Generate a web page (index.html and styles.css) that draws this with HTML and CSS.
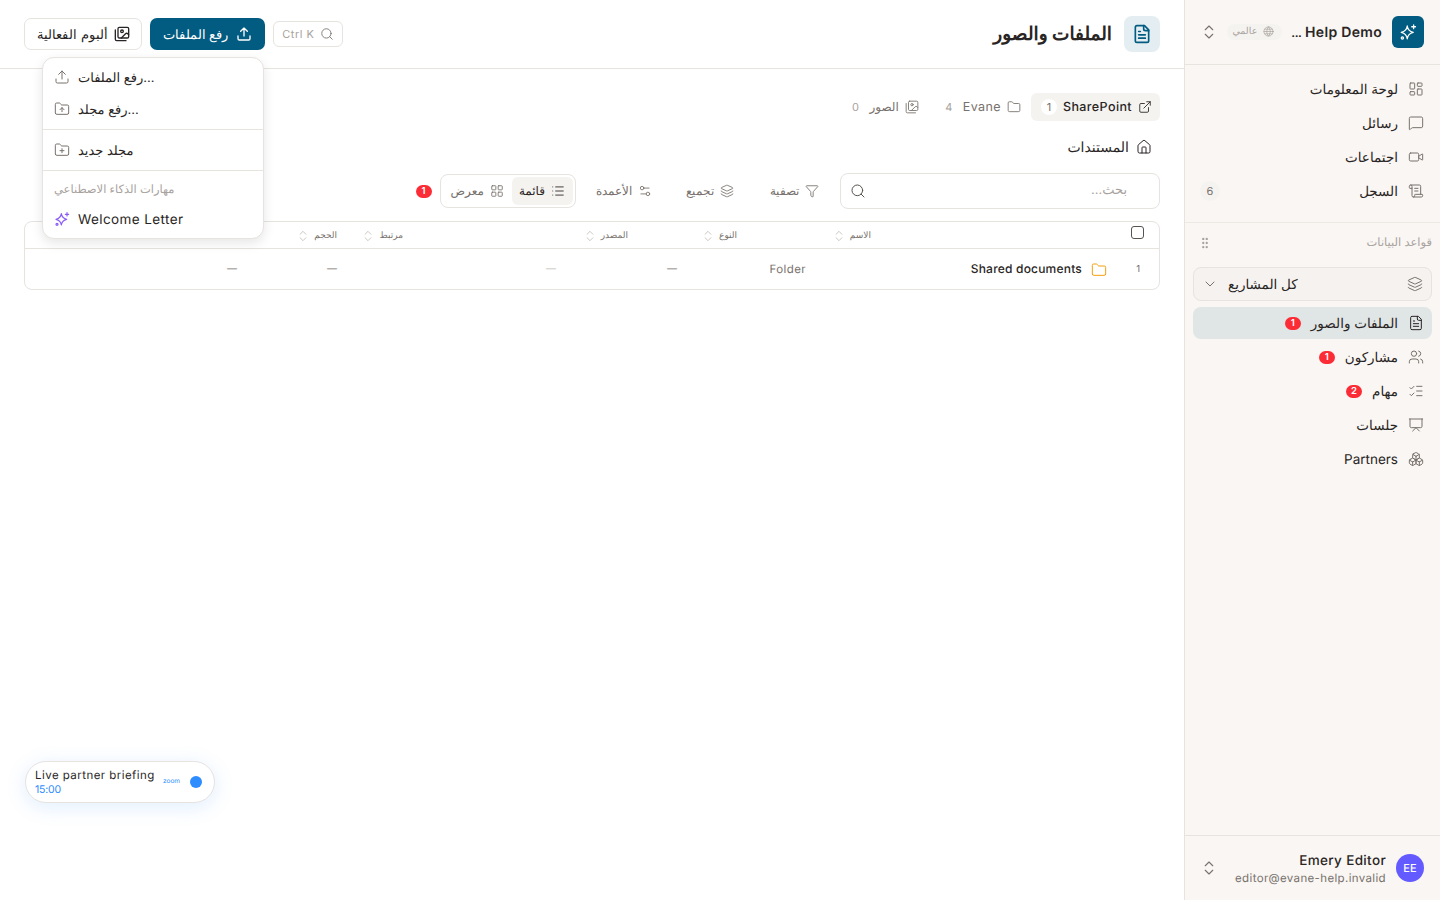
FILE: index.html
```html
<!DOCTYPE html>
<html lang="ar" dir="rtl">
<head>
  <meta charset="UTF-8">
  <meta name="viewport" content="width=device-width, initial-scale=1.0">
  <title>الملفات والصور</title>
  <link rel="stylesheet" href="styles.css">
</head>
<body>
  <!-- Icons -->
  <svg class="icon-defs" aria-hidden="true">
    <symbol id="i-sparkles" viewBox="0 0 24 24"><path d="M11 4c.6 4.600 3.400 7.400 8 8.500-4.600 1.100-7.400 3.900-8 8.500-.6-4.600-3.400-7.400-8-8.500 4.600-1.100 7.400-3.900 8-8.500z"/><path d="M19.500 2.500v5M17 5h5"/><circle cx="4.500" cy="20" r="1.500"/></symbol>
    <symbol id="i-updown" viewBox="0 0 24 24"><path d="m7 15 5 5 5-5M7 9l5-5 5 5"/></symbol>
    <symbol id="i-globe" viewBox="0 0 24 24"><circle cx="12" cy="12" r="10"/><path d="M12 2a14.500 14.500 0 0 0 0 20 14.500 14.500 0 0 0 0-20M2 12h20M4 7h16M4 17h16"/></symbol>
    <symbol id="i-dash" viewBox="0 0 24 24"><rect x="3" y="3" width="7" height="9" rx="1"/><rect x="14" y="3" width="7" height="5" rx="1"/><rect x="14" y="12" width="7" height="9" rx="1"/><rect x="3" y="16" width="7" height="5" rx="1"/></symbol>
    <symbol id="i-message" viewBox="0 0 24 24"><path d="M22 17a2 2 0 0 1-2 2H6.800a2 2 0 0 0-1.400.6l-2.200 2.200A.7.700 0 0 1 2 21.300V5a2 2 0 0 1 2-2h16a2 2 0 0 1 2 2z"/></symbol>
    <symbol id="i-video" viewBox="0 0 24 24"><path d="m16 13 5.200 3.500a.5.500 0 0 0 .8-.4V7.900a.5.500 0 0 0-.8-.4L16 11"/><rect x="2" y="6" width="14" height="12" rx="2"/></symbol>
    <symbol id="i-scroll" viewBox="0 0 24 24"><path d="M15 12h-5M15 8h-5M19 17V5a2 2 0 0 0-2-2H4"/><path d="M8 21h12a2 2 0 0 0 2-2v-1a1 1 0 0 0-1-1H11a1 1 0 0 0-1 1v1a2 2 0 1 1-4 0V5a2 2 0 1 0-4 0v2a1 1 0 0 0 1 1h3"/></symbol>
    <symbol id="i-grip" viewBox="0 0 24 24"><circle cx="9" cy="5" r="1"/><circle cx="15" cy="5" r="1"/><circle cx="9" cy="12" r="1"/><circle cx="15" cy="12" r="1"/><circle cx="9" cy="19" r="1"/><circle cx="15" cy="19" r="1"/></symbol>
    <symbol id="i-layers" viewBox="0 0 24 24"><path d="M12.800 2.200a2 2 0 0 0-1.600 0L2.600 6.100a1 1 0 0 0 0 1.800l8.600 3.900a2 2 0 0 0 1.600 0l8.600-3.900a1 1 0 0 0 0-1.800z"/><path d="M2 12a1 1 0 0 0 .6.900l8.600 3.900a2 2 0 0 0 1.600 0l8.600-3.900A1 1 0 0 0 22 12"/><path d="M2 17a1 1 0 0 0 .6.900l8.600 3.900a2 2 0 0 0 1.600 0l8.600-3.900A1 1 0 0 0 22 17"/></symbol>
    <symbol id="i-chevron" viewBox="0 0 24 24"><path d="m6 9 6 6 6-6"/></symbol>
    <symbol id="i-file" viewBox="0 0 24 24"><path d="M15 2H6a2 2 0 0 0-2 2v16a2 2 0 0 0 2 2h12a2 2 0 0 0 2-2V7z"/><path d="M14 2v4a2 2 0 0 0 2 2h4M10 9H8M16 13H8M16 17H8"/></symbol>
    <symbol id="i-users" viewBox="0 0 24 24"><path d="M16 21v-2a4 4 0 0 0-4-4H6a4 4 0 0 0-4 4v2"/><circle cx="9" cy="7" r="4"/><path d="M22 21v-2a4 4 0 0 0-3-3.900M16 3.100a4 4 0 0 1 0 7.800"/></symbol>
    <symbol id="i-tasks" viewBox="0 0 24 24"><path d="M13 5h8M13 12h8M13 19h8M3 17l2 2 4-4M3 7l2 2 4-4"/></symbol>
    <symbol id="i-present" viewBox="0 0 24 24"><path d="M2 3h20M21 3v11a2 2 0 0 1-2 2H5a2 2 0 0 1-2-2V3M7 21l5-5 5 5"/></symbol>
    <symbol id="i-boxes" viewBox="0 0 24 24"><path d="M2.970 12.920A2 2 0 0 0 2 14.630v3.240a2 2 0 0 0 .97 1.710l3 1.800a2 2 0 0 0 2.060 0L12 19v-5.500l-5-3-4.030 2.420Z"/><path d="m7 16.500-4.740-2.850M7 16.500l5-3M7 16.500v5.170"/><path d="M12 13.500V19l3.970 2.380a2 2 0 0 0 2.060 0l3-1.800a2 2 0 0 0 .97-1.710v-3.240a2 2 0 0 0-.97-1.710L17 10.500l-5 3Z"/><path d="m17 16.500-5-3M17 16.500l4.740-2.850M17 16.500v5.170"/><path d="M7.970 4.420A2 2 0 0 0 7 6.130v4.370l5 3 5-3V6.130a2 2 0 0 0-.97-1.710l-3-1.800a2 2 0 0 0-2.060 0l-3 1.800Z"/><path d="M12 8 7.260 5.150M12 8l4.740-2.850M12 13.500V8"/></symbol>
    <symbol id="i-search" viewBox="0 0 24 24"><circle cx="11" cy="11" r="8"/><path d="m21 21-4.300-4.300"/></symbol>
    <symbol id="i-upload" viewBox="0 0 24 24"><path d="M12 3v12M17 8l-5-5-5 5M21 15v4a2 2 0 0 1-2 2H5a2 2 0 0 1-2-2v-4"/></symbol>
    <symbol id="i-images" viewBox="0 0 24 24"><path d="M18 22H4a2 2 0 0 1-2-2V6"/><path d="m22 13-1.300-1.300a2.410 2.410 0 0 0-3.400 0L11 18"/><circle cx="12" cy="8" r="2"/><rect x="6" y="2" width="16" height="16" rx="2"/></symbol>
    <symbol id="i-external" viewBox="0 0 24 24"><path d="M15 3h6v6M10 14 21 3M18 13v6a2 2 0 0 1-2 2H5a2 2 0 0 1-2-2V8a2 2 0 0 1 2-2h6"/></symbol>
    <symbol id="i-folder" viewBox="0 0 24 24"><path d="M20 20a2 2 0 0 0 2-2V8a2 2 0 0 0-2-2h-7.900a2 2 0 0 1-1.700-.9l-.8-1.200A2 2 0 0 0 7.900 3H4a2 2 0 0 0-2 2v13a2 2 0 0 0 2 2z"/></symbol>
    <symbol id="i-folder-up" viewBox="0 0 24 24"><path d="M20 20a2 2 0 0 0 2-2V8a2 2 0 0 0-2-2h-7.900a2 2 0 0 1-1.700-.9l-.8-1.200A2 2 0 0 0 7.900 3H4a2 2 0 0 0-2 2v13a2 2 0 0 0 2 2z"/><path d="M12 16v-6M9 13l3-3 3 3"/></symbol>
    <symbol id="i-folder-plus" viewBox="0 0 24 24"><path d="M20 20a2 2 0 0 0 2-2V8a2 2 0 0 0-2-2h-7.900a2 2 0 0 1-1.700-.9l-.8-1.200A2 2 0 0 0 7.900 3H4a2 2 0 0 0-2 2v13a2 2 0 0 0 2 2z"/><path d="M12 10v6M9 13h6"/></symbol>
    <symbol id="i-home" viewBox="0 0 24 24"><path d="M15 21v-8a1 1 0 0 0-1-1h-4a1 1 0 0 0-1 1v8"/><path d="M3 10a2 2 0 0 1 .7-1.500l7-6a2 2 0 0 1 2.600 0l7 6a2 2 0 0 1 .7 1.500v9a2 2 0 0 1-2 2H5a2 2 0 0 1-2-2z"/></symbol>
    <symbol id="i-funnel" viewBox="0 0 24 24"><path d="M10 20a1 1 0 0 0 .6.900l2 1A1 1 0 0 0 14 21v-7a2 2 0 0 1 .5-1.300L21.700 4.700A1 1 0 0 0 21 3H3a1 1 0 0 0-.7 1.700l7.200 8A2 2 0 0 1 10 14z"/></symbol>
    <symbol id="i-sliders" viewBox="0 0 24 24"><path d="M14 17H5M19 7h-9"/><circle cx="17" cy="17" r="3"/><circle cx="7" cy="7" r="3"/></symbol>
    <symbol id="i-list" viewBox="0 0 24 24"><path d="M3 5h.01M3 12h.01M3 19h.01M8 5h13M8 12h13M8 19h13"/></symbol>
    <symbol id="i-grid" viewBox="0 0 24 24"><rect x="3" y="3" width="7" height="7" rx="1"/><rect x="14" y="3" width="7" height="7" rx="1"/><rect x="14" y="14" width="7" height="7" rx="1"/><rect x="3" y="14" width="7" height="7" rx="1"/></symbol>
  </svg>

  <div class="app">
    <!-- Sidebar -->
    <aside class="sidebar">
      <div class="side-head">
        <span class="logo"><svg class="icon"><use href="#i-sparkles"/></svg></span>
        <span class="org-name" dir="ltr"><span class="dots">...</span> Help Demo</span>
        <span class="scope"><svg class="icon"><use href="#i-globe"/></svg>عالمي</span>
        <svg class="icon updown"><use href="#i-updown"/></svg>
      </div>

      <nav class="side-nav">
        <a class="nav-item"><svg class="icon"><use href="#i-dash"/></svg>لوحة المعلومات</a>
        <a class="nav-item"><svg class="icon"><use href="#i-message"/></svg>رسائل</a>
        <a class="nav-item"><svg class="icon"><use href="#i-video"/></svg>اجتماعات</a>
        <a class="nav-item"><svg class="icon"><use href="#i-scroll"/></svg>السجل<span class="count">6</span></a>
      </nav>

      <div class="side-section">
        <div class="section-title">قواعد البيانات<svg class="icon"><use href="#i-grip"/></svg></div>
        <div class="project-select">
          <svg class="icon"><use href="#i-layers"/></svg>
          <span class="project-name">كل المشاريع</span>
          <svg class="icon chev"><use href="#i-chevron"/></svg>
        </div>
        <a class="nav-item active"><svg class="icon"><use href="#i-file"/></svg>الملفات والصور<span class="badge">1</span></a>
        <a class="nav-item"><svg class="icon"><use href="#i-users"/></svg>مشاركون<span class="badge">1</span></a>
        <a class="nav-item"><svg class="icon"><use href="#i-tasks"/></svg>مهام<span class="badge">2</span></a>
        <a class="nav-item"><svg class="icon"><use href="#i-present"/></svg>جلسات</a>
        <a class="nav-item"><svg class="icon"><use href="#i-boxes"/></svg>Partners</a>
      </div>

      <div class="side-foot">
        <span class="avatar">EE</span>
        <div class="user">
          <div class="user-name">Emery Editor</div>
          <div class="user-mail">editor@evane-help.invalid</div>
        </div>
        <svg class="icon updown"><use href="#i-updown"/></svg>
      </div>
    </aside>

    <!-- Main -->
    <main class="main">
      <header class="top-bar">
        <span class="title-icon"><svg class="icon"><use href="#i-file"/></svg></span>
        <h1>الملفات والصور</h1>
        <div class="top-actions">
          <span class="kbd"><svg class="icon"><use href="#i-search"/></svg>Ctrl K</span>
          <button class="btn btn-primary"><svg class="icon"><use href="#i-upload"/></svg>رفع الملفات</button>
          <button class="btn btn-outline"><svg class="icon"><use href="#i-images"/></svg>ألبوم الفعالية</button>
        </div>
      </header>

      <div class="content">
        <div class="tabs">
          <span class="tab active"><svg class="icon"><use href="#i-external"/></svg><span class="latin">SharePoint</span><span class="tab-count">1</span></span>
          <span class="tab"><svg class="icon"><use href="#i-folder"/></svg><span class="latin">Evane</span><span class="tab-count">4</span></span>
          <span class="tab"><svg class="icon"><use href="#i-images"/></svg>الصور<span class="tab-count">0</span></span>
        </div>

        <div class="crumb"><svg class="icon"><use href="#i-home"/></svg>المستندات</div>

        <div class="toolbar">
          <div class="search">
            <span>بحث...</span>
            <svg class="icon"><use href="#i-search"/></svg>
          </div>
          <button class="tool"><svg class="icon"><use href="#i-funnel"/></svg>تصفية</button>
          <button class="tool"><svg class="icon"><use href="#i-layers"/></svg>تجميع</button>
          <button class="tool"><svg class="icon"><use href="#i-sliders"/></svg>الأعمدة</button>
          <div class="segment">
            <span class="seg-item active"><svg class="icon"><use href="#i-list"/></svg>قائمة</span>
            <span class="seg-item"><svg class="icon"><use href="#i-grid"/></svg>معرض</span>
          </div>
          <span class="badge">1</span>
        </div>

        <div class="table">
          <div class="table-head">
            <div class="th-check"><input type="checkbox" class="check"></div>
            <div class="th">الاسم<svg class="icon"><use href="#i-updown"/></svg></div>
            <div class="th">النوع<svg class="icon"><use href="#i-updown"/></svg></div>
            <div class="th">المصدر<svg class="icon"><use href="#i-updown"/></svg></div>
            <div class="th">مرتبط<svg class="icon"><use href="#i-updown"/></svg></div>
            <div class="th">الحجم<svg class="icon"><use href="#i-updown"/></svg></div>
          </div>
          <div class="table-row">
            <div class="td-index">1</div>
            <div class="td-name"><svg class="icon"><use href="#i-folder"/></svg><span class="latin">Shared documents</span></div>
            <div class="td-type latin">Folder</div>
            <div class="td-dash">—</div>
            <div class="td-dash light">—</div>
            <div class="td-dash">—</div>
            <div class="td-dash">—</div>
          </div>
        </div>
      </div>

      <!-- Upload menu -->
      <div class="menu" dir="ltr">
        <div class="menu-item"><svg class="icon"><use href="#i-upload"/></svg>رفع الملفات...</div>
        <div class="menu-item"><svg class="icon"><use href="#i-folder-up"/></svg>رفع مجلد...</div>
        <div class="menu-line"></div>
        <div class="menu-item"><svg class="icon"><use href="#i-folder-plus"/></svg>مجلد جديد</div>
        <div class="menu-line"></div>
        <div class="menu-label">مهارات الذكاء الاصطناعي</div>
        <div class="menu-item"><svg class="icon purple"><use href="#i-sparkles"/></svg><span class="latin">Welcome Letter</span></div>
      </div>

      <!-- Live pill -->
      <div class="live-pill" dir="ltr">
        <div class="live-text">
          <div class="live-title">Live partner briefing</div>
          <div class="live-time">15:00</div>
        </div>
        <span class="live-zoom">zoom</span>
        <span class="live-dot"></span>
      </div>
    </main>
  </div>
</body>
</html>
```

FILE: styles.css
```css
/* General Styles */
* {
  box-sizing: border-box;
}

html,
body {
  height: 100%;
}

body {
  margin: 0;
  font-family: 'Inter', 'Noto Sans', sans-serif;
  font-size: 14px;
  line-height: 1.5;
  color: #292524;
  background: #fff;
  text-rendering: geometricPrecision;
}

.icon-defs {
  display: none;
}

.icon {
  width: 16px;
  height: 16px;
  flex: none;
  fill: none;
  stroke: currentColor;
  stroke-width: 2;
  stroke-linecap: round;
  stroke-linejoin: round;
}

.latin {
  letter-spacing: 0.4px;
}

button {
  font: inherit;
  border: none;
  background: none;
  padding: 0;
}

.app {
  display: flex;
  height: 900px;
  overflow: hidden;
}

.nav-item,
.btn,
.scope,
.project-select {
  padding-top: 2px;
}

.nav-item .icon,
.nav-item .badge,
.nav-item .count,
.btn .icon,
.scope .icon,
.project-select .icon {
  margin-top: -2px;
}

/* Sidebar */
.sidebar {
  width: 256px;
  flex: none;
  display: flex;
  flex-direction: column;
  background: #f9f6f3;
  border-left: 1px solid #e7e3df;
}

.side-head {
  height: 65px;
  flex: none;
  display: flex;
  align-items: center;
  padding: 0 16px 1px 15px;
  border-bottom: 1px solid #e7e3df;
}

.logo {
  width: 32px;
  height: 32px;
  border-radius: 6px;
  background: #025b80;
  color: #fff;
  display: flex;
  align-items: center;
  justify-content: center;
}

.logo .icon {
  width: 18px;
  height: 18px;
  stroke-width: 1.700;
}

.org-name {
  margin: 2px 10px 0 0;
  font-size: 14px;
  font-weight: 600;
  letter-spacing: 0.3px;
  white-space: nowrap;
}

.dots {
  letter-spacing: -0.5px;
  font-size: 12px;
}

.scope {
  display: flex;
  align-items: center;
  gap: 6px;
  margin-right: 9px;
  padding-right: 8px;
  padding-left: 5px;
  height: 16px;
  border-radius: 8px;
  background: #f5f3f0;
  color: #a8a29e;
  font-size: 9.500px;
}

.scope .icon {
  width: 11px;
  height: 11px;
  stroke-width: 1.500;
}

.updown {
  width: 18px;
  height: 18px;
  margin-right: auto;
  color: #78716c;
  stroke-width: 1.500;
}

.side-nav {
  padding: 7px 8px 14px;
  border-bottom: 1px solid #ece8e4;
}

.nav-item {
  height: 34px;
  padding-right: 8px;
  padding-left: 8px;
  display: flex;
  align-items: center;
  gap: 10px;
  border-radius: 8px;
  font-size: 13.500px;
  white-space: nowrap;
}

.nav-item .icon {
  color: #78716c;
  stroke-width: 1.500;
}

.nav-item.active {
  height: 32px;
  margin-bottom: 1px;
  background: #e0e5e5;
}

.nav-item.active .icon {
  color: #292524;
}

.count {
  margin-right: auto;
  width: 20px;
  height: 20px;
  margin-left: -1px;
  border-radius: 50%;
  background: #f5f3f0;
  color: #78716c;
  font-size: 11px;
  display: flex;
  align-items: center;
  justify-content: center;
}

.badge {
  width: 16px;
  height: 13px;
  padding-top: 2px;
  border-radius: 7px;
  background: #fb2c36;
  color: #fff;
  font-size: 9.500px;
  font-weight: 600;
  display: flex;
  align-items: center;
  justify-content: center;
  flex: none;
}

.side-section {
  flex: 1;
  padding: 0 8px;
}

.section-title {
  height: 40px;
  margin-bottom: 4px;
  display: flex;
  align-items: center;
  justify-content: space-between;
  font-size: 11.500px;
  color: #a8a29e;
}

.section-title .icon {
  width: 14px;
  height: 14px;
  color: #a8a29e;
  margin-left: 5px;
}

.project-select {
  height: 34px;
  margin-bottom: 6px;
  padding-right: 8px;
  padding-left: 8px;
  display: flex;
  align-items: center;
  gap: 10px;
  background: #f5f2ef;
  border: 1px solid #e7e3df;
  border-radius: 8px;
  font-size: 13.500px;
}

.project-select .icon {
  color: #78716c;
  stroke-width: 1.500;
}

.project-name {
  margin-right: auto;
}

.side-foot {
  height: 65px;
  flex: none;
  display: flex;
  align-items: center;
  gap: 10px;
  padding: 0 16px 0 15px;
  border-top: 1px solid #e7e3df;
}

.avatar {
  width: 28px;
  height: 28px;
  border-radius: 50%;
  background: #635bff;
  color: #fff;
  font-size: 11px;
  font-weight: 500;
  display: flex;
  align-items: center;
  justify-content: center;
}

.user {
  margin-top: 3px;
}

.user-name {
  font-size: 13.500px;
  font-weight: 500;
  letter-spacing: 0.35px;
  line-height: 18px;
}

.user-mail {
  margin-top: -1px;
  font-size: 11.500px;
  letter-spacing: 0.35px;
  line-height: 18px;
  color: #78716c;
  direction: ltr;
}

/* Main */
.main {
  flex: 1;
  position: relative;
  min-width: 0;
}

.top-bar {
  height: 69px;
  display: flex;
  align-items: center;
  padding: 0 24px;
  border-bottom: 1px solid #e7e3df;
}

.title-icon {
  width: 36px;
  height: 36px;
  border-radius: 8px;
  background: #e4eef2;
  color: #025b80;
  display: flex;
  align-items: center;
  justify-content: center;
}

.title-icon .icon {
  width: 20px;
  height: 20px;
}

h1 {
  margin: 2px 12px 0 0;
  font-size: 18.500px;
  font-weight: 700;
}

.top-actions {
  margin-right: auto;
  display: flex;
  align-items: center;
  gap: 8px;
}

.kbd {
  height: 26px;
  padding: 0 8px;
  display: flex;
  align-items: center;
  gap: 6px;
  border: 1px solid #e7e3df;
  border-radius: 6px;
  color: #a8a29e;
  font-size: 11px;
  letter-spacing: 0.5px;
}

.kbd .icon {
  width: 14px;
  height: 14px;
  color: #78716c;
  stroke-width: 1.500;
}

.btn {
  height: 32px;
  padding-right: 13px;
  padding-left: 13px;
  display: flex;
  align-items: center;
  gap: 8px;
  border-radius: 7px;
  font-size: 13px;
}

.btn-primary {
  background: #025b80;
  color: #fff;
}

.btn-outline {
  padding-right: 11px;
  padding-left: 12px;
  gap: 6px;
  border: 1px solid #e7e3df;
  color: #292524;
}

.content {
  padding: 24px;
}

.tabs {
  display: flex;
  gap: 2px;
  height: 28px;
}

.tab {
  height: 28px;
  padding: 0 8px 0 10px;
  display: flex;
  align-items: center;
  gap: 6px;
  border-radius: 6px;
  font-size: 12px;
  color: #78716c;
}

.tab:last-child {
  margin-right: 2px;
}

.tab .latin {
  margin-top: 2px;
  font-size: 12.500px;
}

.tab .icon {
  width: 14px;
  height: 14px;
  stroke-width: 1.500;
}

.tab.active {
  background: #f5f3f0;
  color: #292524;
  font-weight: 500;
}

.tab-count {
  min-width: 16px;
  height: 16px;
  display: flex;
  align-items: center;
  justify-content: center;
  border-radius: 50%;
  font-size: 11px;
  color: #a8a29e;
  font-weight: 400;
}

.tab.active .tab-count {
  background: #fff;
  color: #78716c;
}

.crumb {
  height: 24px;
  margin-top: 14px;
  padding: 0 8px;
  display: flex;
  align-items: center;
  gap: 7px;
  font-size: 14px;
}

.crumb .icon {
  stroke-width: 1.500;
}

.toolbar {
  margin-top: 14px;
  height: 36px;
  display: flex;
  align-items: center;
}

.search {
  width: 320px;
  height: 36px;
  padding: 0 32px 0 9px;
  display: flex;
  align-items: center;
  justify-content: space-between;
  border: 1px solid #e7e3df;
  border-radius: 8px;
  font-size: 13px;
  color: #a8a29e;
}

.search .icon {
  color: #57534e;
  stroke-width: 1.500;
}

.tool {
  height: 32px;
  padding: 0 13px;
  margin-right: 8px;
  display: flex;
  align-items: center;
  gap: 6px;
  font-size: 12px;
  color: #78716c;
}

.tool:first-of-type {
  padding-left: 15px;
}

.tool .icon {
  width: 14px;
  height: 14px;
  stroke-width: 1.500;
}

.segment {
  margin-right: 7px;
  height: 34px;
  padding: 2px;
  display: flex;
  border: 1px solid #e7e3df;
  border-radius: 8px;
}

.seg-item {
  height: 28px;
  padding: 0 8px 0 8px;
  display: flex;
  align-items: center;
  gap: 6px;
  border-radius: 6px;
  font-size: 12px;
  color: #78716c;
}

.seg-item .icon {
  width: 14px;
  height: 14px;
  stroke-width: 1.500;
}

.seg-item.active {
  padding-left: 7px;
  background: #f5f3f0;
  color: #292524;
  font-weight: 500;
}

.toolbar .badge {
  margin-right: 8px;
}

/* Table */
.table {
  margin-top: 12px;
  border: 1px solid #e7e3df;
  border-radius: 8px;
}

.table-head {
  height: 27px;
  display: grid;
  grid-template-columns: 288px 134px 109px 225px 66px 1fr;
  align-items: center;
  border-bottom: 1px solid #e7e3df;
}

.th-check {
  padding-right: 15px;
  margin-top: -5px;
  display: flex;
}

.check {
  width: 13px;
  height: 13px;
  margin: 0;
  appearance: none;
  border: 1px solid #57534e;
  border-radius: 3px;
  background: #fff;
}

.th {
  padding-top: 2px;
  display: flex;
  align-items: center;
  gap: 4px;
  font-size: 9px;
  color: #78716c;
}

.th .icon {
  width: 14px;
  height: 14px;
  color: #c4bfba;
  stroke-width: 1.500;
}

.table-row {
  height: 40px;
  padding-top: 1px;
  display: grid;
  grid-template-columns: 52px 301px 129px 121px 219px 100px 1fr;
  align-items: center;
  font-size: 11.500px;
}

.td-index {
  padding-top: 2px;
  padding-right: 19px;
  font-size: 9.500px;
  color: #78716c;
}

.td-name {
  display: flex;
  align-items: center;
  gap: 9px;
  font-size: 12px;
  font-weight: 500;
}

.td-name .latin {
  margin-top: -2px;
  letter-spacing: 0.2px;
}

.td-name .icon {
  color: #f59e0b;
  stroke-width: 1.500;
}

.td-type {
  color: #78716c;
}

.td-dash {
  font-size: 10px;
  color: #78716c;
}

.td-dash.light {
  color: #c4bfba;
}

/* Upload menu */
.menu {
  position: absolute;
  top: 57px;
  left: 42px;
  width: 222px;
  height: 182px;
  padding: 3px 0;
  background: #fff;
  border: 1px solid #e7e3df;
  border-radius: 12px;
  box-shadow: 0 4px 12px rgba(0, 0, 0, 0.1);
}

.menu-item {
  height: 32px;
  padding: 4px 11px 0;
  display: flex;
  align-items: center;
  gap: 8px;
  font-size: 13px;
}

.menu-item .latin {
  margin-top: -2px;
  font-size: 13.500px;
}

.menu-item .icon {
  margin-top: -4px;
  color: #78716c;
  stroke-width: 1.500;
}

.menu-item .icon.purple {
  color: #8b5cf6;
  stroke-width: 1.800;
}

.menu-line {
  height: 1px;
  margin: 4px 0;
  background: #e7e3df;
}

.menu-label {
  padding: 6px 11px;
  font-size: 11.500px;
  line-height: 16px;
  color: #a8a29e;
}

/* Live pill */
.live-pill {
  position: absolute;
  left: 25px;
  top: 761px;
  width: 190px;
  height: 42px;
  padding: 0 12px 0 9px;
  display: flex;
  align-items: center;
  background: #fff;
  border: 1px solid #e7e3df;
  border-radius: 21px;
  box-shadow: 0 4px 20px rgba(45, 140, 255, 0.15);
}

.live-title {
  font-size: 11.500px;
  letter-spacing: 0.45px;
  line-height: 15px;
}

.live-time {
  font-size: 10.500px;
  letter-spacing: -0.2px;
  line-height: 13px;
  color: #2d8cff;
}

.live-zoom {
  margin-left: auto;
  font-size: 6.500px;
  color: #2d8cff;
}

.live-dot {
  width: 12px;
  height: 12px;
  margin-left: 10px;
  border-radius: 50%;
  background: #2d8cff;
}
```
